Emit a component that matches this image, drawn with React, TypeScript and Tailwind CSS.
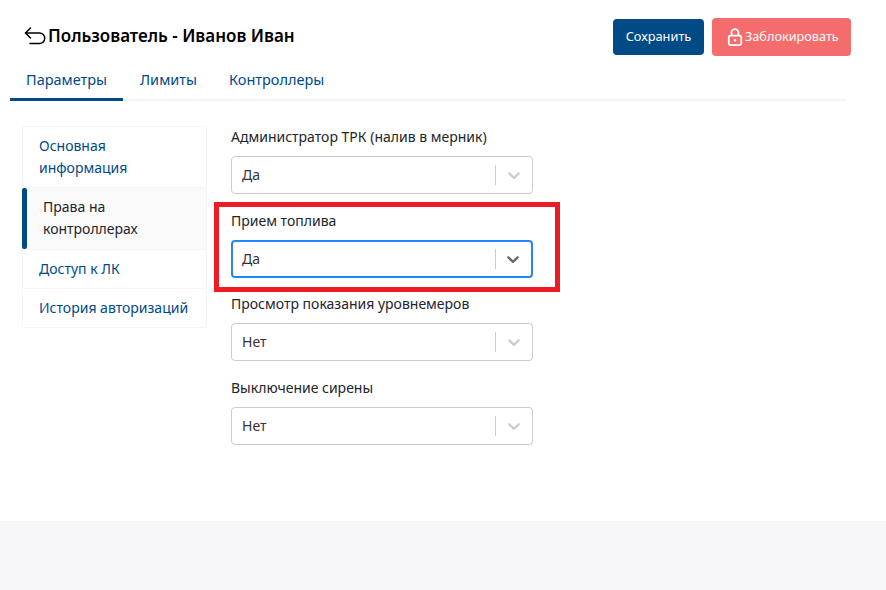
const NAVY = "text-[#004a86]";

function Chevron({ active }: { active?: boolean }) {
  return (
    <svg width="20" height="20" viewBox="0 0 20 20" className={active ? "fill-[#666666]" : "fill-[#cccccc]"}>
      <path d="M4.516 7.548c0.436-0.446 1.043-0.481 1.576 0l3.908 3.747 3.908-3.747c0.533-0.481 1.141-0.446 1.574 0 0.436 0.445 0.408 1.197 0 1.615-0.406 0.418-4.695 4.502-4.695 4.502-0.217 0.223-0.502 0.335-0.787 0.335s-0.57-0.112-0.789-0.335c0 0-4.287-4.084-4.695-4.502s-0.436-1.17 0-1.615z" />
    </svg>
  );
}

function Field({ label, value, active, cls }: { label: string; value: string; active?: boolean; cls: string }) {
  return (
    <div className={cls}>
      <div className="h-[21px] text-[14px] leading-[21px] text-[#212529]">{label}</div>
      <div
        className={
          "mt-[9px] flex h-[38px] w-[302px] items-center rounded-[4px] bg-white " +
          (active ? "border-2 border-[#2684ff] pl-[9px]" : "border border-[#cccccc] pl-[10px]")
        }
      >
        <span className="flex-1 text-[14px] leading-[18px] text-[#333333]">{value}</span>
        <span className="h-[20px] w-px bg-[#cccccc]" />
        <span className={"flex justify-center " + (active ? "w-[35px] pr-px" : "w-[36px]")}>
          <Chevron active={active} />
        </span>
      </div>
    </div>
  );
}

export default function App() {
  return (
    <div className="relative flex h-[590px] w-[886px] flex-col overflow-hidden bg-white font-['Noto_Sans',sans-serif]">
      <div className="h-[521px] pl-[10px] pr-[35px]">
        <div className="flex h-[74px] items-center justify-between pl-[14px]">
          <div className="flex items-center text-black">
            <svg width="24" height="24" viewBox="0 0 24 24" fill="none" stroke="currentColor" strokeWidth="1.5" strokeLinecap="round" strokeLinejoin="round">
              <path d="M6.5 3 1.5 8l5 5" />
              <path d="M1.5 8h14a5.25 5.25 0 0 1 0 10.5H6" />
            </svg>
            <h1 className="pb-[2px] text-[17px] font-semibold leading-[24px]">Пользователь - Иванов Иван</h1>
          </div>
          <div className="flex items-center gap-[8px]">
            <button className="h-[36px] w-[91px] rounded-[4px] bg-[#004a86] text-[12.8px] text-white">Сохранить</button>
            <button className="flex h-[38px] w-[139px] items-center gap-[2px] rounded-[4px] bg-[#f56c6c] pl-[15px] text-[12.7px] text-white">
              <svg width="16" height="18" viewBox="0 0 16 18" fill="none" stroke="currentColor" strokeWidth="1.75">
                <rect x="1.75" y="7.5" width="12.5" height="9.5" rx="2" />
                <path d="M4.5 7.5V4.5a3.5 3.5 0 0 1 7 0v3" />
                <circle cx="8" cy="12.25" r="1.2" fill="currentColor" stroke="none" />
              </svg>
              Заблокировать
            </button>
          </div>
        </div>
        <div className="mr-[4px] flex h-[27px] border-b-2 border-[#f5f5f5]">
          <div className={"-mb-[2px] h-[27px] w-[113px] border-b-[3px] border-[#004a86] pl-[16px] text-[14.5px] leading-[10px] " + NAVY}>Параметры</div>
          <div className={"pl-[17px] text-[14.5px] leading-[10px] " + NAVY}>Лимиты</div>
          <div className={"pl-[32px] text-[14.5px] leading-[10px] " + NAVY}>Контроллеры</div>
        </div>
        <div className="flex pl-[12px] pt-[25px]">
          <div className="flex h-[202px] w-[185px] flex-col rounded-[2px] border border-[#f5f5f5] text-[14px] leading-[22px]">
            <div className={"h-[61px] border-b border-[#f5f5f5] pl-[16px] pt-[8px] " + NAVY}>Основная<br />информация</div>
            <div className="relative h-[62px] border-b border-[#f5f5f5] bg-[#fafafa] pl-[20px] pt-[8px] text-[#212529]">
              <span className="absolute -left-px top-0 h-full w-[5px] rounded-[2px] bg-[#004a86]" />
              Права на<br />контроллерах
            </div>
            <div className={"h-[39px] border-b border-[#f5f5f5] pl-[16px] pt-[8px] " + NAVY}>Доступ к ЛК</div>
            <div className={"pl-[16px] pt-[8px] " + NAVY}>История авторизаций</div>
          </div>
          <div className="ml-[24px]">
            <Field label="Администратор ТРК (налив в мерник)" value="Да" cls="" />
            <Field label="Прием топлива" value="Да" active cls="mt-[16px]" />
            <Field label="Просмотр показания уровнемеров" value="Нет" cls="mt-[15px]" />
            <Field label="Выключение сирены" value="Нет" cls="mt-[16px]" />
          </div>
        </div>
      </div>
      <div className="flex-1 bg-[#f7f7f9]" />
      <div className="absolute left-[214px] top-[202px] h-[90px] w-[346px] border-[5px] border-[#ed1c24]" />
    </div>
  );
}
